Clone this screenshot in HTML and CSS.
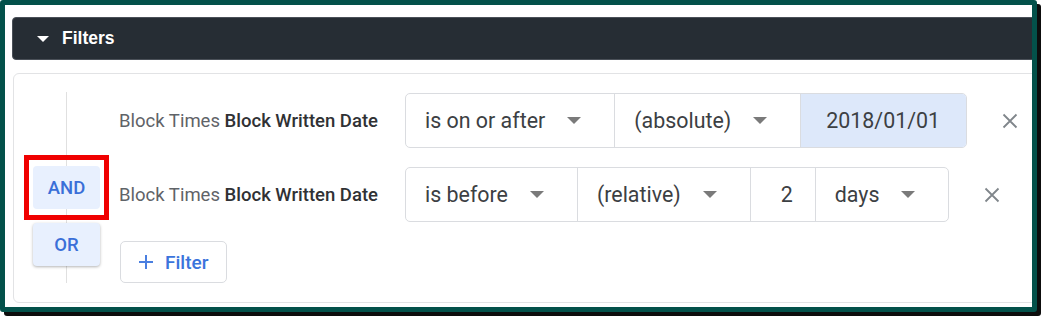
FILE: index.html
```html
<!DOCTYPE html>
<html lang="en">
<head>
    <meta charset="UTF-8">
    <meta name="viewport" content="width=device-width, initial-scale=1.0">
    <title>Filters</title>
    <link rel="stylesheet" href="styles.css">
</head>
<body>
    <div class="frame">
        <div class="content">

            <div class="filtersHeader">
                <span class="headerCaret"></span>
                <span class="headerTitle">Filters</span>
            </div>

            <div class="filtersPanel">
                <div class="logicColumn">
                    <div class="highlightBox">
                        <button class="logicButton">AND</button>
                    </div>
                    <button class="logicButton raised">OR</button>
                </div>

                <div class="rowsColumn">
                    <div class="filterRow">
                        <div class="fieldLabel"><span class="fieldGroup">Block Times</span> <b>Block Written Date</b></div>
                        <div class="selectGroup">
                            <div class="segment">is on or after <span class="caret"></span></div>
                            <div class="segment">(absolute) <span class="caret"></span></div>
                            <div class="segment dateValue">2018/01/01</div>
                        </div>
                        <svg class="removeIcon" width="16" height="16" viewBox="0 0 16 16">
                            <path d="M1.5 1.5 L14.5 14.5 M14.5 1.5 L1.5 14.5" stroke="#80868b" stroke-width="1.8" fill="none"/>
                        </svg>
                    </div>

                    <div class="filterRow">
                        <div class="fieldLabel"><span class="fieldGroup">Block Times</span> <b>Block Written Date</b></div>
                        <div class="selectGroup">
                            <div class="segment">is before <span class="caret"></span></div>
                            <div class="segment">(relative) <span class="caret"></span></div>
                            <div class="segment numberValue">2</div>
                            <div class="segment">days <span class="caret"></span></div>
                        </div>
                        <svg class="removeIcon" width="16" height="16" viewBox="0 0 16 16">
                            <path d="M1.5 1.5 L14.5 14.5 M14.5 1.5 L1.5 14.5" stroke="#80868b" stroke-width="1.8" fill="none"/>
                        </svg>
                    </div>

                    <div>
                        <button class="addFilter">
                            <svg width="16" height="16" viewBox="0 0 16 16">
                                <path d="M8 1 V15 M1 8 H15" stroke="#4a7fe0" stroke-width="2" fill="none"/>
                            </svg>
                            Filter
                        </button>
                    </div>
                </div>
            </div>

        </div>
    </div>
</body>
</html>
```

FILE: styles.css
```css
html, body {
    min-height: 319px;
}

body {
    margin: 0;
    background-color: white;
    font-family: Roboto, "Liberation Sans", sans-serif;
}

.frame {
    width: 1027px;
    height: 302px;
    border: 5px solid #03514a;
    border-radius: 3px;
    box-shadow: 4px 4px 0 #0d0d0d;
    background-color: white;
    overflow: hidden;
}

.content {
    width: 1100px;
    padding: 12px 0 0 7px;
}

.filtersHeader {
    height: 41px;
    border: 1px solid #4a5058;
    border-radius: 4px;
    background-color: #262d34;
    display: flex;
    align-items: center;
    padding-left: 24px;
}

.headerCaret {
    width: 0;
    height: 0;
    border-left: 6px solid transparent;
    border-right: 6px solid transparent;
    border-top: 6px solid white;
    margin-right: 13px;
}

.headerTitle {
    color: white;
    font-family: "Liberation Sans", Arial, sans-serif;
    font-weight: bold;
    font-size: 17.5px;
}

.filtersPanel {
    margin: 13px 0 0 1px;
    border: 1px solid #e2e3e5;
    border-radius: 6px;
    padding: 19px 0 19px 0;
    display: flex;
}

.logicColumn {
    position: relative;
    width: 105px;
    display: flex;
    flex-direction: column;
    align-items: flex-start;
}

.logicColumn::before {
    content: "";
    position: absolute;
    left: 52px;
    top: -1px;
    bottom: 0;
    width: 1px;
    background-color: #e0e0e0;
}

.highlightBox {
    position: relative;
    margin: 62px 0 0 10px;
    border: 5px solid #f00000;
    padding: 6px 4px;
    display: flex;
}

.logicButton {
    position: relative;
    width: 67px;
    height: 43px;
    border: none;
    border-radius: 4px;
    background-color: #e8f0fe;
    color: #3a6fd8;
    font-family: Roboto, sans-serif;
    font-weight: 500;
    font-size: 18.5px;
}

.logicButton.raised {
    margin: 3px 0 0 19px;
    box-shadow: 0 1px 3px rgba(0, 0, 0, 0.3);
}

.rowsColumn {
    display: flex;
    flex-direction: column;
    gap: 19px;
}

.filterRow {
    display: flex;
    align-items: center;
    height: 55px;
}

.fieldLabel {
    width: 286px;
    font-size: 18.5px;
    color: #3c4043;
}

.fieldLabel .fieldGroup {
    color: #5f6368;
}

.fieldLabel b {
    font-weight: 500;
    color: #303134;
}

.selectGroup {
    display: flex;
    height: 55px;
    border: 1px solid #dadce0;
    border-radius: 5px;
    box-sizing: border-box;
    overflow: hidden;
}

.segment {
    display: flex;
    align-items: center;
    padding: 0 33px 0 19px;
    font-size: 21.4px;
    color: #3c4043;
    border-left: 1px solid #dadce0;
}

.segment:first-child {
    border-left: none;
}

.caret {
    width: 0;
    height: 0;
    margin-left: 22px;
    border-left: 7px solid transparent;
    border-right: 7px solid transparent;
    border-top: 7px solid #7a7a7a;
}

.dateValue {
    background-color: #dde8fa;
    padding: 0 26px 0 25px;
}

.numberValue {
    width: 65px;
    box-sizing: border-box;
    justify-content: flex-end;
    padding: 0 22px 0 0;
}

.removeIcon {
    margin-left: 35px;
}

.addFilter {
    margin-left: 1px;
    width: 107px;
    height: 42px;
    border: 1px solid #dadce0;
    border-radius: 5px;
    background-color: white;
    color: #3b74dc;
    font-family: Roboto, sans-serif;
    font-weight: 500;
    font-size: 19px;
    display: flex;
    align-items: center;
    gap: 11px;
    padding: 0 0 0 17px;
}
```
